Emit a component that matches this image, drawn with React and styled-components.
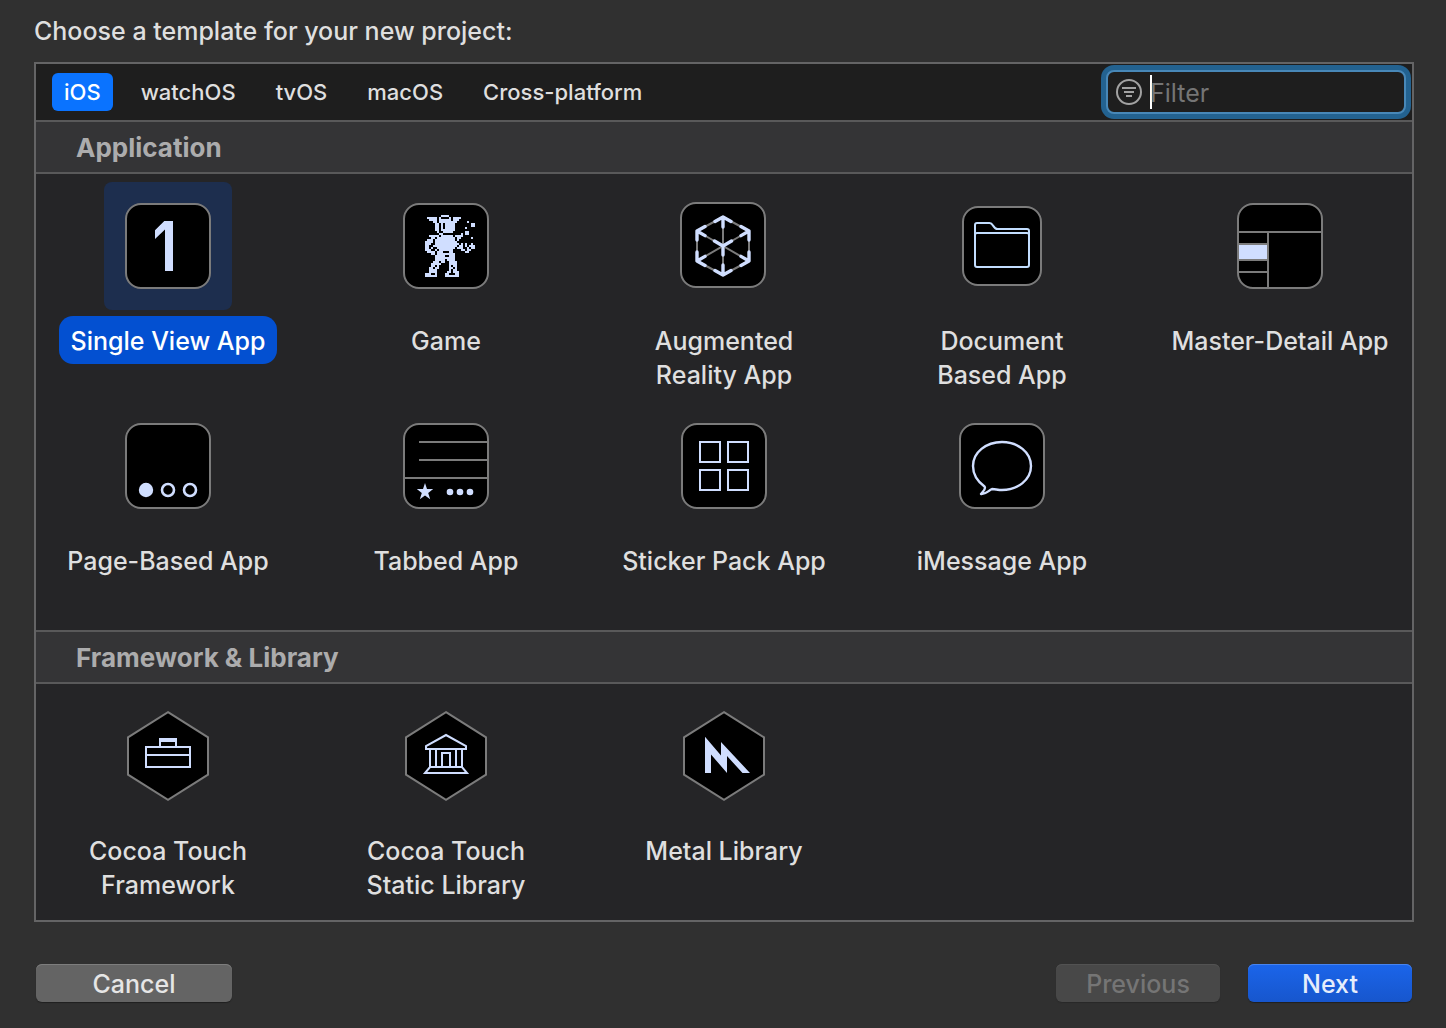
import React, { useState } from "react";
import styled, { createGlobalStyle, css } from "styled-components";

const GlobalStyle = createGlobalStyle`
  *, *::before, *::after { box-sizing: border-box; }
  body {
    margin: 0;
    background: #303030;
    color: #dfdfdf;
    font-family: Inter, "Liberation Sans", sans-serif;
    font-size: 25px;
  }
  button, input { font: inherit; color: inherit; }
`;

const Dialog = styled.main`
  padding: 14px 32px 26px 34px;
`;

const Title = styled.h1`
  margin: 0 0 14px;
  font-size: 25px;
  font-weight: 500;
  line-height: 34px;
`;

const Panel = styled.section`
  border: 2px solid #646465;
  background: #252527;
`;

const Toolbar = styled.div`
  display: flex;
  align-items: center;
  justify-content: space-between;
  height: 56px;
  padding: 0 6px 0 16px;
  background: #1e1e1e;
`;

const Tabs = styled.nav`
  display: flex;
  gap: 16px;
`;

const Tab = styled.button`
  height: 38px;
  padding: 0 12px;
  border: 0;
  border-radius: 6px;
  background: ${(p) => (p.$active ? "#0a73ff" : "transparent")};
  color: ${(p) => (p.$active ? "#ffffff" : "#dfdfdf")};
  font-size: 22px;
  font-weight: 500;
  line-height: 38px;
`;

const Search = styled.label`
  display: flex;
  align-items: center;
  width: 300px;
  height: 44px;
  padding-left: 6px;
  border: 2px solid #4888b8;
  border-radius: 8px;
  background: #1e1e1e;
  box-shadow: 0 0 0 5px #236290;
`;

const FilterIcon = styled.svg`
  flex: none;
  width: 28px;
  height: 28px;
  margin-right: 8px;
`;

const Caret = styled.span`
  flex: none;
  width: 2px;
  height: 34px;
  margin-right: -2px;
  background: #ffffff;
`;

const FilterInput = styled.input`
  flex: 1;
  min-width: 0;
  height: 40px;
  padding: 2px 0 0;
  border: 0;
  outline: 0;
  background: transparent;
  caret-color: transparent;
  &::placeholder { color: #757575; opacity: 1; }
`;

const GroupHeading = styled.h2`
  margin: 0;
  padding: 2px 40px 0;
  border: solid #59595a;
  border-width: 2px 0;
  background: #343436;
  color: #acacad;
  font-size: 26px;
  font-weight: 700;
  line-height: 48px;
`;

const Grid = styled.div`
  display: grid;
  grid-template-columns: repeat(5, minmax(0, 1fr));
  grid-auto-rows: minmax(220px, auto);
  column-gap: 58px;
  padding: 8px 22px;
`;

const Item = styled.button`
  display: flex;
  flex-direction: column;
  align-items: center;
  gap: 6px;
  padding: 0;
  border: 0;
  background: transparent;
`;

const Tile = styled.svg`
  flex: none;
  width: 128px;
  height: 128px;
  border-radius: 8px;
  background: ${(p) => (p.$selected ? "#1d2e4e" : "transparent")};
`;

const Label = styled.span`
  padding: 8px 12px 6px;
  border-radius: 14px;
  font-weight: 500;
  line-height: 34px;
  text-align: center;
  white-space: pre;
  ${(p) =>
    p.$selected &&
    css`
      background: #0350d1;
      color: #ffffff;
    `}
`;

const Footer = styled.footer`
  display: flex;
  gap: 28px;
  margin-top: 42px;
  padding: 0 2px;
`;

const tones = {
  plain: css`
    background: #646464;
    color: #e6e6e6;
    box-shadow: inset 0 1px 0 #7d7d7d, 0 1px 1px #202020;
  `,
  disabled: css`
    background: #484848;
    color: #757575;
    box-shadow: inset 0 1px 0 #525252, 0 1px 1px #292929;
  `,
  primary: css`
    background: linear-gradient(#1b65ea, #1756cd);
    color: #e6edfb;
    box-shadow: inset 0 1px 0 #4884ee, 0 1px 1px #202020;
  `,
};

const Action = styled.button`
  width: ${(p) => (p.$wide ? 196 : 164)}px;
  height: 38px;
  padding: 2px 0 0;
  border: 0;
  border-radius: 6px;
  font-weight: 500;
  line-height: 36px;
  ${(p) => p.$push && "margin-left: auto;"}
  ${(p) => tones[p.$tone]}
`;

const ICE = "#d0deff";
const GRAY = "#7b7b7b";

const Frame = ({ x = 22, y = 22, size = 84 }) => (
  <rect x={x} y={y} width={size} height={size} rx="15" fill="#000" stroke={GRAY} strokeWidth="2" />
);

const Hexagon = () => (
  <path d="M64 20.2 104 45.4V82.6L64 107.8 24 82.6V45.4Z" fill="#000" stroke={GRAY} strokeWidth="2" />
);

const SPRITE = [
  "........####.............",
  ".#####.#....#.####.......",
  "..####.######.###........",
  "....##.#########.....#...",
  ".....##.#.#####........##",
  ".....##.#.#####........##",
  ".....##.#.#####.....#....",
  ".....##.#######..........",
  "......#..#####......##...",
  ".......##.........#.##...",
  "..#####.######.####......",
  "...##.#########.##.....#.",
  ".###.##########.#........",
  "####.###########.........",
  "###..############.#.#..#.",
  "##..############.##.#.###",
  "##.#..#########.###..#.##",
  "###..#.#######....##.##..",
  ".####.###...##......##...",
  "...##.#########..........",
  ".....#####..###..........",
  ".....##########..........",
  ".....#####.####..........",
  "....###.##..####.........",
  "...#####....####.........",
  "...##.#.....#.##.........",
  "..##.##.....##.#.........",
  "..####......#.##.........",
  "..####.....##.###........",
  "###..#....##...##........",
  "######....#######........",
];

const spritePath = SPRITE.flatMap((row, y) =>
  [...row].map((cell, x) => (cell === "#" ? `M${43 + x * 2} ${33 + y * 2}h2v2h-2z` : ""))
).join("");

const art = {
  single: (
    <>
      <Frame />
      <path d="M51 48.3 60.3 39H69V89H61V47.5L51 57Z" fill={ICE} />
    </>
  ),
  game: (
    <>
      <Frame />
      <path d={spritePath} fill={ICE} shapeRendering="crispEdges" />
    </>
  ),
  ar: (
    <>
      <Frame x={21} y={21} />
      <g fill="none" strokeLinejoin="round">
        <path
          d="M63 35 89 49V79L63 93 37 79V49ZM63 35V93M37 49 89 79M89 49 37 79"
          stroke={GRAY}
          strokeWidth="2"
        />
        <path
          d="M55 39.500 63 35 71 39.500M63 35V45M55 88.500 63 93 71 88.500M63 93V83M45 44.500 37 49V58M37 49 45 53.600M81 44.500 89 49V58M89 49 81 53.600M45 83.500 37 79V70M37 79 45 74.400M81 83.500 89 79V70M89 79 81 74.400M54.500 59 63 64 71.500 59M63 64V73"
          stroke={ICE}
          strokeWidth="3.400"
          strokeLinecap="round"
        />
      </g>
    </>
  ),
  document: (
    <>
      <Frame x={25} y={25} size={78} />
      <path
        d="M37 43q0-2 2-2H51.500c4 0 3.500 6 8 6H89q2 0 2 2V83q0 2-2 2H39q-2 0-2-2ZM37 53q0-2 2-2H89q2 0 2 2"
        fill="none"
        stroke="#c3deff"
        strokeWidth="2"
      />
    </>
  ),
  master: (
    <>
      <Frame />
      <path d="M23 63H51V77H23Z" fill={ICE} />
      <path d="M22 50H106M52 50V106M22 62H52M22 78H52M22 90H52" stroke={GRAY} strokeWidth="2" />
    </>
  ),
  page: (
    <>
      <Frame />
      <circle cx="42" cy="88" r="7.200" fill={ICE} />
      <g fill="none" stroke={ICE} strokeWidth="2.600">
        <circle cx="64" cy="88" r="6" />
        <circle cx="86" cy="88" r="6" />
      </g>
    </>
  ),
  tabbed: (
    <>
      <Frame />
      <path d="M37 40H106M37 58H106M22 76H106" stroke={GRAY} strokeWidth="2" />
      <path
        d="M43 81 45 87H51.200L46.200 91 48.200 97.200 43 93.500 37.800 97.200 39.800 91 34.800 87H41Z"
        fill={ICE}
      />
      <g fill={ICE}>
        <circle cx="68" cy="90" r="3.300" />
        <circle cx="78" cy="90" r="3.300" />
        <circle cx="88" cy="90" r="3.300" />
      </g>
    </>
  ),
  sticker: (
    <>
      <Frame />
      <path
        d="M40 40H60V60H40ZM68 40H88V60H68ZM40 68H60V88H40ZM68 68H88V88H68Z"
        fill="none"
        stroke={ICE}
        strokeWidth="2"
      />
    </>
  ),
  message: (
    <>
      <Frame />
      <path
        d="M64 40C80 40 93 50.500 93 64S80 88 64 88C60 88 57 87 54 87 50.500 88.500 48 92.500 43 92 44.500 90 48.500 87 46.500 84.500 39 79 35 72 35 64 35 50.500 48 40 64 40Z"
        fill="none"
        stroke={ICE}
        strokeWidth="2.400"
        strokeLinejoin="round"
      />
    </>
  ),
  briefcase: (
    <>
      <Hexagon />
      <path d="M42 55H86V75H42ZM42 63H86M56 55V48M72 55V48" fill="none" stroke={ICE} strokeWidth="2" />
      <path d="M55 46H73V50H55Z" fill={ICE} />
    </>
  ),
  library: (
    <>
      <Hexagon />
      <path
        d="M44 57V54L64 43 84 54V57ZM48 57V75M54 57V75M74 57V75M80 57V75M60 75V61H68V75M48 75H80L85 81H43Z"
        fill="none"
        stroke={ICE}
        strokeWidth="2"
      />
    </>
  ),
  metal: (
    <>
      <Hexagon />
      <path d="M45 44.700 61 63.500V50L90 81H82.500L67 64V81L51 62.500V81H45Z" fill={ICE} />
    </>
  ),
};

const platforms = ["iOS", "watchOS", "tvOS", "macOS", "Cross-platform"];

const groups = [
  {
    name: "Application",
    items: [
      ["single", "Single View App"],
      ["game", "Game"],
      ["ar", "Augmented\nReality App"],
      ["document", "Document\nBased App"],
      ["master", "Master-Detail App"],
      ["page", "Page-Based App"],
      ["tabbed", "Tabbed App"],
      ["sticker", "Sticker Pack App"],
      ["message", "iMessage App"],
    ],
  },
  {
    name: "Framework & Library",
    items: [
      ["briefcase", "Cocoa Touch\nFramework"],
      ["library", "Cocoa Touch\nStatic Library"],
      ["metal", "Metal Library"],
    ],
  },
];

export default function App() {
  const [platform, setPlatform] = useState("iOS");
  const [selected, setSelected] = useState("single");

  return (
    <>
      <GlobalStyle />
      <Dialog>
        <Title>Choose a template for your new project:</Title>
        <Panel>
          <Toolbar>
            <Tabs>
              {platforms.map((name) => (
                <Tab
                  key={name}
                  type="button"
                  $active={name === platform}
                  aria-pressed={name === platform}
                  onClick={() => setPlatform(name)}
                >
                  {name}
                </Tab>
              ))}
            </Tabs>
            <Search>
              <FilterIcon viewBox="0 0 28 28" aria-hidden="true">
                <circle cx="15" cy="14" r="12" fill="none" stroke="#a2a2a2" strokeWidth="2" />
                <path d="M8 10H22M10 14H20M12 18H18" stroke="#a2a2a2" strokeWidth="2" />
              </FilterIcon>
              <Caret />
              <FilterInput type="text" placeholder="Filter" aria-label="Filter" />
            </Search>
          </Toolbar>
          {groups.map((group) => (
            <React.Fragment key={group.name}>
              <GroupHeading>{group.name}</GroupHeading>
              <Grid>
                {group.items.map(([id, label]) => (
                  <Item
                    key={id}
                    type="button"
                    aria-pressed={id === selected}
                    onClick={() => setSelected(id)}
                  >
                    <Tile viewBox="0 0 128 128" $selected={id === selected} aria-hidden="true">
                      {art[id]}
                    </Tile>
                    <Label $selected={id === selected}>{label}</Label>
                  </Item>
                ))}
              </Grid>
            </React.Fragment>
          ))}
        </Panel>
        <Footer>
          <Action type="button" $wide $tone="plain">Cancel</Action>
          <Action type="button" $push $tone="disabled" disabled>Previous</Action>
          <Action type="button" $tone="primary">Next</Action>
        </Footer>
      </Dialog>
    </>
  );
}
